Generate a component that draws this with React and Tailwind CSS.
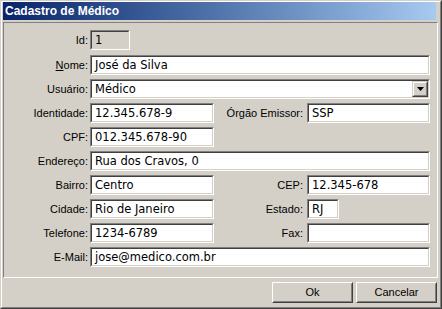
import React from "react";

const labelFont = { fontFamily: '"Liberation Sans", Arial, sans-serif' };
const fieldFont = { fontFamily: '"DejaVu Sans", Verdana, sans-serif' };

function Field({ w, gray, children }) {
  return (
    <div
      className={`${w} h-[20px] border border-t-[#808080] border-l-[#808080] border-b-white border-r-white shrink-0`}
    >
      <div
        className={`h-full border border-t-[#404040] border-l-[#404040] border-b-[#d4d0c8] border-r-[#d4d0c8] ${gray ? "bg-[#d4d0c8]" : "bg-white"} pl-[3px] text-[11.5px] leading-[16px] text-black whitespace-nowrap overflow-hidden`}
        style={fieldFont}
      >
        {children}
      </div>
    </div>
  );
}

function Label({ w, children }) {
  return (
    <div
      className={`${w} shrink-0 text-right text-[11px] leading-[20px] text-black whitespace-nowrap`}
      style={labelFont}
    >
      {children}
    </div>
  );
}

function Row({ children, extra = "" }) {
  return <div className={`flex items-center h-[20px] ${extra}`}>{children}</div>;
}

function Select({ value }) {
  return (
    <div className="w-[340px] h-[20px] border border-t-[#808080] border-l-[#808080] border-b-white border-r-white shrink-0">
      <div className="h-full flex border border-t-[#404040] border-l-[#404040] border-b-[#d4d0c8] border-r-[#d4d0c8] bg-white">
        <div
          className="flex-1 pl-[3px] text-[11.5px] leading-[16px] text-black"
          style={fieldFont}
        >
          {value}
        </div>
        <div className="w-[16px] h-[16px] border border-t-[#d4d0c8] border-l-[#d4d0c8] border-b-[#404040] border-r-[#404040]">
          <div className="w-full h-full border border-t-white border-l-white border-b-[#808080] border-r-[#808080] bg-[#d4d0c8] flex items-center justify-center">
            <svg width="7" height="4" viewBox="0 0 7 4">
              <path d="M0 0h7L3.5 4z" fill="#000" />
            </svg>
          </div>
        </div>
      </div>
    </div>
  );
}

function Button({ children }) {
  return (
    <div className="w-[81px] h-[21px] border border-t-white border-l-white border-b-[#404040] border-r-[#404040]">
      <div
        className="w-full h-full border border-t-[#d4d0c8] border-l-[#d4d0c8] border-b-[#808080] border-r-[#808080] bg-[#d4d0c8] flex items-center justify-center text-[11px] text-black"
        style={labelFont}
      >
        {children}
      </div>
    </div>
  );
}

export default function App() {
  return (
    <div className="w-[442px] h-[309px] border border-t-[#d4d0c8] border-l-[#d4d0c8] border-b-[#404040] border-r-[#404040]">
      <div className="w-full h-full border border-t-white border-l-white border-b-[#808080] border-r-[#808080] bg-[#d4d0c8] flex flex-col pl-[1px] pr-[2px]">
        <div
          className="h-[18px] mr-[2px] bg-linear-to-r from-[#0a246a] to-[#a6caf0] flex items-center pl-[2px] text-white font-bold text-[12px]"
          style={labelFont}
        >
          Cadastro de Médico
        </div>
        <div className="mt-[2px] h-[256px] border border-t-[#808080] border-l-[#808080] border-b-white border-r-white pt-[7px] flex flex-col gap-[4px]">
          <Row>
            <Label w="w-[84px]">Id:</Label>
            <div className="w-[2px]" />
            <Field w="w-[40px]" gray>1</Field>
          </Row>
          <Row extra="mt-[1px]">
            <Label w="w-[84px]">
              <span className="underline">N</span>ome:
            </Label>
            <div className="w-[2px]" />
            <Field w="w-[340px]">José da Silva</Field>
          </Row>
          <Row>
            <Label w="w-[84px]">Usuário:</Label>
            <div className="w-[2px]" />
            <Select value="Médico" />
          </Row>
          <Row>
            <Label w="w-[84px]">Identidade:</Label>
            <div className="w-[2px]" />
            <Field w="w-[124px]">12.345.678-9</Field>
            <Label w="w-[89px]">Órgão Emissor:</Label>
            <div className="w-[4px]" />
            <Field w="w-[123px]">SSP</Field>
          </Row>
          <Row>
            <Label w="w-[84px]">CPF:</Label>
            <div className="w-[2px]" />
            <Field w="w-[124px]">012.345.678-90</Field>
          </Row>
          <Row>
            <Label w="w-[84px]">Endereço:</Label>
            <div className="w-[2px]" />
            <Field w="w-[340px]">Rua dos Cravos, 0</Field>
          </Row>
          <Row>
            <Label w="w-[84px]">Bairro:</Label>
            <div className="w-[2px]" />
            <Field w="w-[124px]">Centro</Field>
            <Label w="w-[89px]">CEP:</Label>
            <div className="w-[4px]" />
            <Field w="w-[123px]">12.345-678</Field>
          </Row>
          <Row>
            <Label w="w-[84px]">Cidade:</Label>
            <div className="w-[2px]" />
            <Field w="w-[124px]">Rio de Janeiro</Field>
            <Label w="w-[89px]">Estado:</Label>
            <div className="w-[4px]" />
            <Field w="w-[32px]">RJ</Field>
          </Row>
          <Row>
            <Label w="w-[84px]">Telefone:</Label>
            <div className="w-[2px]" />
            <Field w="w-[124px]">1234-6789</Field>
            <Label w="w-[89px]">Fax:</Label>
            <div className="w-[4px]" />
            <Field w="w-[123px]"></Field>
          </Row>
          <Row>
            <Label w="w-[84px]">E-Mail:</Label>
            <div className="w-[2px]" />
            <Field w="w-[340px]">jose@medico.com.br</Field>
          </Row>
        </div>
        <div className="flex-1 flex justify-end items-start pt-[4px] pr-[1px] gap-[3px]">
          <Button>Ok</Button>
          <Button>Cancelar</Button>
        </div>
      </div>
    </div>
  );
}
